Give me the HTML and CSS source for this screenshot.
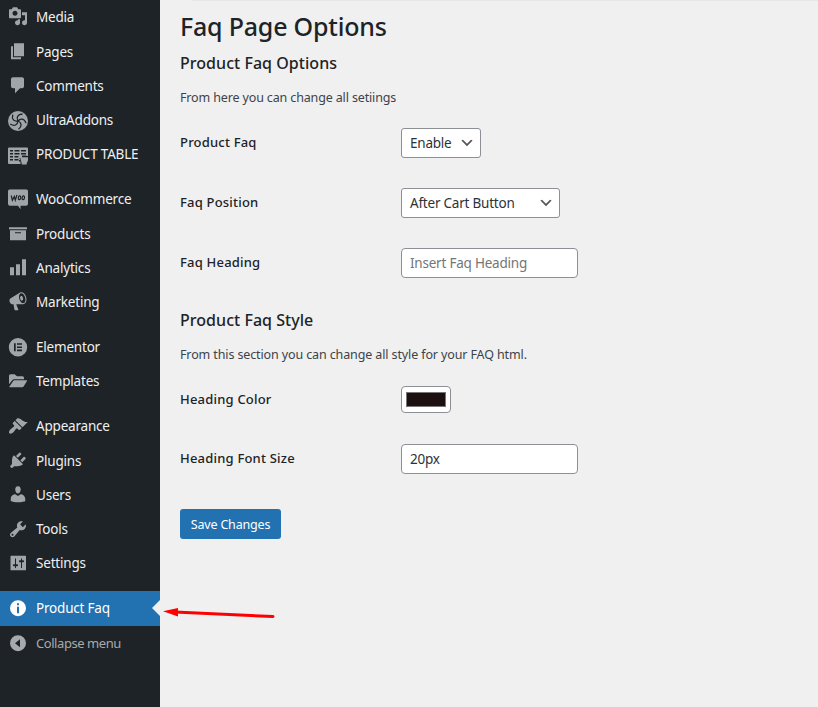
FILE: index.html
```html
<!DOCTYPE html>
<html lang="en">
<head>
<meta charset="utf-8">
<title>Faq Page Options</title>
<link rel="stylesheet" href="styles.css">
</head>
<body>
<div class="layout">
<nav class="sidebar">
<ul class="menu">
<li class="item first"><svg class="icon" viewBox="0 0 20 20"><path d="M13 11V4c0-.55-.45-1-1-1h-1.67L9 1H5L3.67 3H2c-.55 0-1 .45-1 1v7c0 .55.45 1 1 1h10c.55 0 1-.45 1-1zM7 4.5c1.38 0 2.5 1.12 2.5 2.5S8.38 9.5 7 9.5 4.5 8.38 4.5 7 5.62 4.5 7 4.5zM14 6h5v10.5c0 1.38-1.12 2.5-2.5 2.5S14 17.88 14 16.5s1.12-2.5 2.5-2.5c.17 0 .34.02.5.05V9h-3V6zm-4 8.05V13h2v3.5c0 1.38-1.12 2.5-2.5 2.5S7 17.88 7 16.5 8.12 14 9.5 14c.17 0 .34.02.5.05z"/></svg><span>Media</span></li>
<li class="item"><svg class="icon" viewBox="0 0 20 20"><path d="M6 15V2h10v13H6zm-1 1h8v2H3V5h2v11z"/></svg><span>Pages</span></li>
<li class="item"><svg class="icon" viewBox="0 0 20 20"><path d="M5 2h9c1.100 0 2 .9 2 2v7c0 1.100-.9 2-2 2h-2l-5 5v-5H5c-1.100 0-2-.9-2-2V4c0-1.100.9-2 2-2z"/></svg><span>Comments</span></li>
<li class="item"><svg class="icon low" viewBox="0 0 20 20"><circle cx="10" cy="10" r="10"/><g class="swirl"><path d="M10 10C8 6.500 9.500 3.300 14.500 3"/><path d="M10 10C8 6.500 9.500 3.300 14.500 3" transform="rotate(72 10 10)"/><path d="M10 10C8 6.500 9.500 3.300 14.500 3" transform="rotate(144 10 10)"/><path d="M10 10C8 6.500 9.500 3.300 14.500 3" transform="rotate(216 10 10)"/><path d="M10 10C8 6.500 9.500 3.300 14.500 3" transform="rotate(288 10 10)"/></g></svg><span>UltraAddons</span></li>
<li class="item"><svg class="icon low" viewBox="0 0 20 20"><path fill-rule="evenodd" d="M1 1.500h18a1 1 0 0 1 1 1V10h-1.500V9.500H14V11h-3v1.500h1v1.600h-1v1.500h1.500V18H1a1 1 0 0 1-1-1V2.500a1 1 0 0 1 1-1zM2 4v1.500h3V4zm4.500 0v1.500h5V4zM13 4v1.500h5V4zM2 7v1.500h3V7zm4.500 0v1.500h5V7zM13 7v1.500h5V7zM2 10v1.500h3V10zm4.500 0v1.500h4V10zM2 13v1.500h3V13zm4.500 0v1.500h4V13z"/><path d="M10.800 10.300h2.400l.4.900H20v3l-1 2.600h-5.500L12.300 12h-1.500zM13.700 16.800h5v1.600h-5z"/></svg><span>PRODUCT TABLE</span></li>
<li class="separator"></li>
<li class="item"><svg class="icon" viewBox="0 0 20 20"><path d="M2 0h16q2 0 2 2v12.500q0 2-2 2h-5.500V20L10 16.500H2q-2 0-2-2V2Q0 0 2 0z"/><g class="woo"><path d="M3.200 6.300l1.200 4.700L6.300 7.300l1 3.700 1.600-5.200"/><ellipse cx="11.500" cy="8.600" rx="1.200" ry="1.900" transform="rotate(12 11.500 8.600)"/><ellipse cx="15.300" cy="8.600" rx="1.200" ry="1.900" transform="rotate(12 15.300 8.600)"/></g></svg><span>WooCommerce</span></li>
<li class="item"><svg class="icon" viewBox="0 0 20 20"><path d="M19 4v2H1V4h18zM2 7h16v10H2V7zm11 3V9H7v1h6z"/></svg><span>Products</span></li>
<li class="item"><svg class="icon" viewBox="0 0 20 20"><path d="M18 18V2h-4v16h4zm-6 0V7H8v11h4zm-6 0v-8H2v8h4z"/></svg><span>Analytics</span></li>
<li class="item"><svg class="icon" viewBox="0 0 20 20"><path d="M18.150 5.940c.46 1.620.38 3.220-.02 4.480-.42 1.280-1.260 2.180-2.300 2.480-.16.06-.26.06-.4.06-.06.02-.12.02-.18.02-.06.02-.14.02-.22.02h-6.800l2.220 5.500c.02.14-.06.26-.14.34-.08.1-.24.16-.34.16H6.950c-.1 0-.26-.06-.34-.16-.08-.08-.16-.2-.14-.34l-1-5.500H4.250l-.02-.02c-.5.06-1.080-.18-1.540-.62s-.88-1.080-1.060-1.880c-.24-.8-.2-1.560-.02-2.200.18-.62.58-1.080 1.060-1.300l.02-.02 9-5.400c.1-.06.18-.1.24-.16.06-.04.14-.08.24-.12.16-.08.28-.12.5-.18 1.040-.3 2.240.1 3.220.98s1.840 2.240 2.260 3.860zm-2.580 5.980h-.02c.4-.1.74-.34 1.040-.7.58-.7.86-1.760.86-3.040 0-.64-.1-1.300-.28-1.980-.34-1.360-1.020-2.500-1.780-3.240s-1.680-1.100-2.460-.88c-.82.22-1.400.96-1.700 2-.32 1.040-.28 2.360.06 3.720.38 1.360 1 2.500 1.800 3.240.78.74 1.620 1.100 2.480.88zm-2.540-7.080c.22-.04.42-.02.62.04.38.16.76.48 1.020 1s.42 1.200.42 1.780c0 .3-.04.56-.12.8-.18.48-.44.84-.86.94-.34.1-.8-.06-1.140-.4s-.64-.86-.78-1.500c-.18-.62-.12-1.240.02-1.720s.48-.84.82-.94z"/></svg><span>Marketing</span></li>
<li class="separator"></li>
<li class="item"><svg class="icon" viewBox="0 0 20 20"><path fill-rule="evenodd" d="M10 .8a9.200 9.200 0 1 0 0 18.400A9.200 9.200 0 0 0 10 .8zM6 6h1.700v8H6zM9 6h5v1.600H9zm0 3.200h5v1.600H9zm0 3.200h5V14H9z"/></svg><span>Elementor</span></li>
<li class="item"><svg class="icon" viewBox="0 0 20 20"><path d="M1 13V4.500Q1 3 2.500 3h4L9 5h5.500q1.500 0 1.500 1.500V8H6.200q-1.200 0-1.900 1zM1.300 15.500l3.900-5.800q.5-.7 1.300-.7h12.200q.7 0 .3.700l-3.400 5.500q-.5.800-1.400.8H2q-.8 0-.7-.5z"/></svg><span>Templates</span></li>
<li class="separator short-gap"></li>
<li class="item"><svg class="icon" viewBox="0 0 20 20"><path d="M14.480 11.060L7.410 3.990l1.500-1.500c.5-.56 2.300-.47 3.510.32 1.210.8 1.430 1.280 2.910 2.100 1.180.64 2.450 1.260 4.450.85zm-.71.71L6.700 4.700 4.930 6.470c-.39.39-.39 1.020 0 1.410l1.060 1.060c.39.39.39 1.030 0 1.420-.6.6-1.430 1.110-2.210 1.690-.35.26-.7.53-1.010.84C1.430 14.230.4 16.080 1.400 17.070c.99 1 2.840-.03 4.180-1.360.31-.31.58-.66.85-1.020.57-.78 1.080-1.610 1.690-2.210.39-.39 1.020-.39 1.410 0l1.060 1.060c.39.39 1.020.39 1.410 0z"/></svg><span>Appearance</span></li>
<li class="item tall"><svg class="icon" viewBox="0 0 20 20"><path d="M13.110 4.360L9.870 7.600 8 5.730l3.240-3.240c.35-.34 1.050-.2 1.560.32.52.51.66 1.210.31 1.550zm-8 1.770l.91-1.120 9.010 9.010-1.190.84c-.71.71-2.630 1.160-3.820 1.160H6.140L4.900 17.260c-.59.59-1.540.59-2.120 0-.59-.58-.59-1.530 0-2.120l1.240-1.240v-3.880c0-1.130.4-3.190 1.090-3.890zm7.260 3.970l3.240-3.240c.34-.35 1.040-.21 1.550.31.52.51.66 1.210.31 1.550l-3.240 3.250z"/></svg><span>Plugins</span></li>
<li class="item"><svg class="icon" viewBox="0 0 20 20"><path d="M10 9.250c-2.270 0-2.730-3.440-2.730-3.440C7 4.020 7.820 2 9.970 2c2.160 0 2.980 2.020 2.710 3.810 0 0-.41 3.440-2.680 3.440zm0 2.570L12.720 10c2.390 0 4.520 2.330 4.520 4.530v2.490s-3.650 1.130-7.240 1.130c-3.650 0-7.240-1.130-7.240-1.130v-2.490c0-2.250 1.940-4.480 4.470-4.480z"/></svg><span>Users</span></li>
<li class="item"><svg class="icon" viewBox="0 0 20 20"><path d="M16.680 9.770c-1.340 1.340-3.300 1.670-4.950.99l-5.410 6.520c-.99.99-2.590.99-3.580 0s-.99-2.590 0-3.570l6.520-5.420c-.68-1.650-.35-3.610.99-4.950 1.280-1.280 3.120-1.620 4.720-1.060l-2.890 2.890 2.820 2.820 2.860-2.870c.53 1.580.18 3.390-1.080 4.650zM3.810 16.210c.4.39 1.040.39 1.430 0 .4-.4.4-1.040 0-1.430-.39-.4-1.030-.4-1.430 0-.39.39-.39 1.030 0 1.430z"/></svg><span>Tools</span></li>
<li class="item"><svg class="icon" viewBox="0 0 20 20"><path d="M18 16.500V3q0-.5-.5-.5H3q-.5 0-.5.5v13.500q0 .5.500.5H17.500q.5 0 .5-.5zM8 11h1c.55 0 1 .45 1 1s-.45 1-1 1H8v1.500c0 .28-.22.5-.5.5s-.5-.22-.5-.5V13H6c-.55 0-1-.45-1-1s.45-1 1-1h1V5.500c0-.28.22-.5.5-.5s.5.220.5.5V11zm5-2h-1c-.55 0-1-.45-1-1s.45-1 1-1h1V5.500c0-.28.22-.5.5-.5s.5.220.5.5V7h1c.55 0 1 .45 1 1s-.45 1-1 1h-1v5.500c0 .28-.22.5-.5.5s-.5-.22-.5-.5V9z"/></svg><span>Settings</span></li>
<li class="separator last"></li>
<li class="item current"><svg class="icon" viewBox="0 0 20 20"><path fill-rule="evenodd" d="M10 2a8 8 0 1 0 0 16 8 8 0 0 0 0-16zM9 5h2v2H9zm0 3.500h2V15H9z"/></svg><span>Product Faq</span></li>
<li class="item collapse"><svg class="icon" viewBox="0 0 20 20"><path fill-rule="evenodd" d="M10 2a8 8 0 1 0 0 16 8 8 0 0 0 0-16zM12 6v8l-5-4z"/></svg><span>Collapse menu</span></li>
</ul>
</nav>
<main class="content">
<div class="topline"></div>
<h1 class="title">Faq Page Options</h1>
<section>
<h2 class="heading">Product Faq Options</h2>
<p class="intro">From here you can change all setiings</p>
<div class="row"><label class="label">Product Faq</label><div class="select short"><span>Enable</span><svg class="chevron" viewBox="0 0 20 20"><path d="M5 6l5 5 5-5 2 1-7 7-7-7 2-1z"/></svg></div></div>
<div class="row"><label class="label">Faq Position</label><div class="select long"><span>After Cart Button</span><svg class="chevron" viewBox="0 0 20 20"><path d="M5 6l5 5 5-5 2 1-7 7-7-7 2-1z"/></svg></div></div>
<div class="row"><label class="label">Faq Heading</label><input class="input" type="text" placeholder="Insert Faq Heading"></div>
</section>
<section class="style-section">
<h2 class="heading">Product Faq Style</h2>
<p class="intro wide">From this section you can change all style for your FAQ html.</p>
<div class="row color-row"><label class="label">Heading Color</label><div class="color"><div class="swatch"></div></div></div>
<div class="row"><label class="label">Heading Font Size</label><input class="input" type="text" value="20px"></div>
</section>
<button class="save">Save Changes</button>
</main>
</div>
<svg class="arrow" viewBox="0 0 116 20"><path class="shaft" d="M14 7L112 11.500"/><path d="M2 6.300L17 3v8.500z"/></svg>
</body>
</html>
```
FILE: styles.css
```css
* { box-sizing: border-box; }
body {
  margin: 0;
  background: #f0f0f0;
  color: #3c434a;
  font: 13px/1.4 "Noto Sans", "Open Sans", sans-serif;
  overflow: hidden;
}
.layout { display: flex; height: 707px; }
.sidebar { width: 160px; flex: none; background: #1d2327; }
.menu { margin: 0; padding: 0; list-style: none; }
.item {
  position: relative;
  display: flex;
  align-items: center;
  gap: 8px;
  height: 34.2px;
  padding-left: 8px;
  color: #f0f0f1;
  font-size: 13.5px;
  letter-spacing: -0.2px;
  white-space: nowrap;
}
.first { height: 35px; padding-bottom: 0.8px; }
.icon { width: 20px; height: 20px; flex: none; fill: #a0a5aa; transform: translateY(-0.8px); }
.low { transform: translateY(1px); }
.separator { height: 11px; }
.short-gap { height: 10.6px; }
.tall { height: 34.6px; }
.last { height: 10.2px; }
.swirl path { fill: none; stroke: #1d2327; stroke-width: 1.3; }
.woo { fill: none; stroke: #1d2327; stroke-width: 1.2; }
.current { height: 35px; background: #2271b1; color: #fff; }
.current .icon { fill: #fff; }
.current::after {
  content: "";
  position: absolute;
  right: 0;
  top: 9px;
  border: 8px solid transparent;
  border-right-color: #f0f0f0;
  border-left: 0;
}
.collapse { height: 35px; color: #a7aaad; font-size: 13px; letter-spacing: -0.44px; }
.collapse .icon { fill: #a7aaad; }
.content {
  flex: 1;
  margin-left: 20px;
}
.topline { height: 1px; margin: 0 0 7px 12px; background: #e6e6e6; }
.title {
  margin: 0;
  font-size: 25px;
  line-height: 36px;
  font-weight: 500;
  letter-spacing: -0.2px;
  color: #1d2327;
}
.heading {
  margin: 7px 0 0;
  font-size: 16px;
  line-height: 24px;
  font-weight: 500;
  letter-spacing: 0.04px;
  color: #1d2327;
}
.intro { margin: 14px 0 6px; line-height: 18px; font-size: 12.5px; letter-spacing: -0.14px; }
.wide { letter-spacing: -0.12px; }
.row { display: flex; height: 60px; padding-top: 15px; }
.label {
  width: 221px;
  padding-top: 5px;
  line-height: 18px;
  font-size: 13px;
  font-weight: 500;
  letter-spacing: 0.2px;
  color: #1d2327;
}
.select, .input {
  height: 30px;
  border: 1px solid #8c8f94;
  border-radius: 4px;
  background: #fff;
  color: #2c3338;
  font: 13.5px/28px "Noto Sans", "Open Sans", sans-serif;
  letter-spacing: -0.22px;
}
.select { display: flex; justify-content: space-between; align-items: center; padding: 0 5px 0 8px; border-radius: 3px; }
.short { width: 80px; }
.long { width: 159px; }
.chevron { width: 16px; height: 16px; fill: #555; }
.input { width: 177px; padding: 0 8px; }
.input::placeholder { color: #757575; opacity: 1; }
.style-section { padding-top: 8px; }
.style-section .intro { margin-bottom: 7px; }
.color-row { height: 58px; }
.color-row .label { padding-top: 4px; }
.color { width: 50px; height: 27px; padding: 5px 4px; border: 1px solid #8c8f94; border-radius: 4px; background: #fff; }
.swatch { height: 15px; background: #1d1011; border: 1px solid #777; }
.save {
  display: block;
  width: 101px;
  height: 30px;
  margin-top: 20px;
  padding: 1px 0 0;
  border: 0;
  border-radius: 3px;
  background: #2271b1;
  color: #fff;
  font: 12.5px/29px "Noto Sans", "Open Sans", sans-serif;
  letter-spacing: -0.18px;
}
.arrow { position: absolute; left: 161px; top: 605px; width: 116px; height: 20px; fill: #f00; }
.shaft { stroke: #f00; stroke-width: 3; stroke-linecap: round; }
```
